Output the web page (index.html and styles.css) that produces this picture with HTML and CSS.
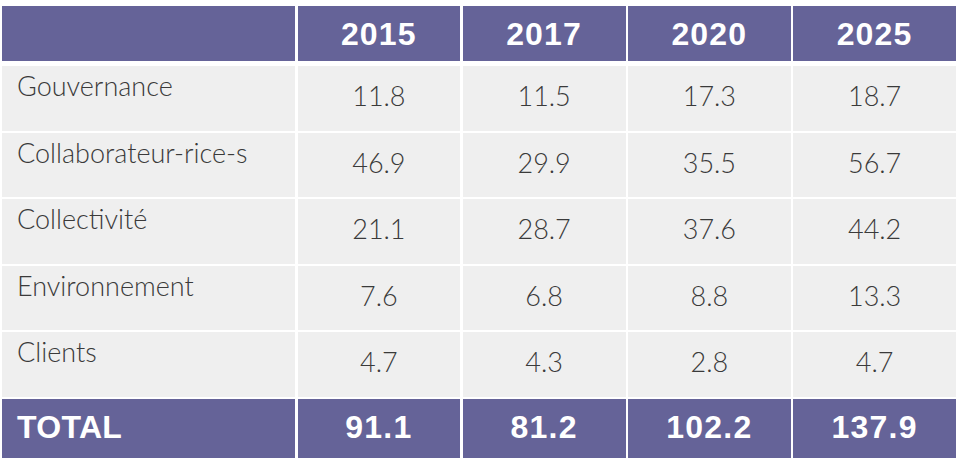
FILE: index.html
```html
<!DOCTYPE html>
<html lang="fr">
<head>
<meta charset="utf-8">
<title>Tableau</title>
<link rel="stylesheet" href="styles.css">
</head>
<body>
<div class="table">
  <div class="cell head"></div>
  <div class="cell head">2015</div>
  <div class="cell head">2017</div>
  <div class="cell head">2020</div>
  <div class="cell head">2025</div>

  <div class="cell label">Gouvernance</div>
  <div class="cell num">11.8</div>
  <div class="cell num">11.5</div>
  <div class="cell num">17.3</div>
  <div class="cell num">18.7</div>

  <div class="cell label">Collaborateur-rice-s</div>
  <div class="cell num">46.9</div>
  <div class="cell num">29.9</div>
  <div class="cell num">35.5</div>
  <div class="cell num">56.7</div>

  <div class="cell label">Collectivité</div>
  <div class="cell num">21.1</div>
  <div class="cell num">28.7</div>
  <div class="cell num">37.6</div>
  <div class="cell num">44.2</div>

  <div class="cell label">Environnement</div>
  <div class="cell num">7.6</div>
  <div class="cell num">6.8</div>
  <div class="cell num">8.8</div>
  <div class="cell num">13.3</div>

  <div class="cell label">Clients</div>
  <div class="cell num">4.7</div>
  <div class="cell num">4.3</div>
  <div class="cell num">2.8</div>
  <div class="cell num">4.7</div>

  <div class="cell total total-label">TOTAL</div>
  <div class="cell total">91.1</div>
  <div class="cell total">81.2</div>
  <div class="cell total">102.2</div>
  <div class="cell total">137.9</div>
</div>
</body>
</html>
```
FILE: styles.css
```css
html, body {
  margin: 0;
  padding: 0;
  background: #ffffff;
}

.table {
  display: grid;
  grid-template-columns: 293px repeat(4, 1fr);
  grid-template-rows: 58px repeat(5, 64.5px) 59px;
  column-gap: 2.5px;
  row-gap: 2px;
  width: 954px;
  margin: 6px 0 0 2px;
}

.cell {
  box-sizing: border-box;
}

.head {
  height: 55px;
  background: #656398;
  color: #ffffff;
  font-family: "Liberation Sans", Arial, sans-serif;
  font-weight: 700;
  font-size: 32px;
  letter-spacing: 1.2px;
  display: flex;
  align-items: center;
  justify-content: center;
  padding-top: 2px;
}

.label {
  background: #efefef;
  color: #3a3a3a;
  font-family: Lato, "Open Sans", sans-serif;
  font-weight: 300;
  font-size: 27px;
  line-height: 1;
  padding: 6px 0 0 15px;
}

.num {
  background: #efefef;
  color: #3a3a3a;
  font-family: Lato, "Open Sans", sans-serif;
  font-weight: 300;
  font-size: 27px;
  line-height: 1;
  display: flex;
  align-items: center;
  justify-content: center;
  padding-bottom: 5px;
}

.total {
  background: #656398;
  color: #ffffff;
  font-family: "Liberation Sans", Arial, sans-serif;
  font-weight: 700;
  font-size: 32px;
  letter-spacing: 1.2px;
  display: flex;
  align-items: center;
  justify-content: center;
  padding-bottom: 2px;
}

.total-label {
  justify-content: flex-start;
  padding-left: 15px;
  letter-spacing: 0.3px;
}
```
